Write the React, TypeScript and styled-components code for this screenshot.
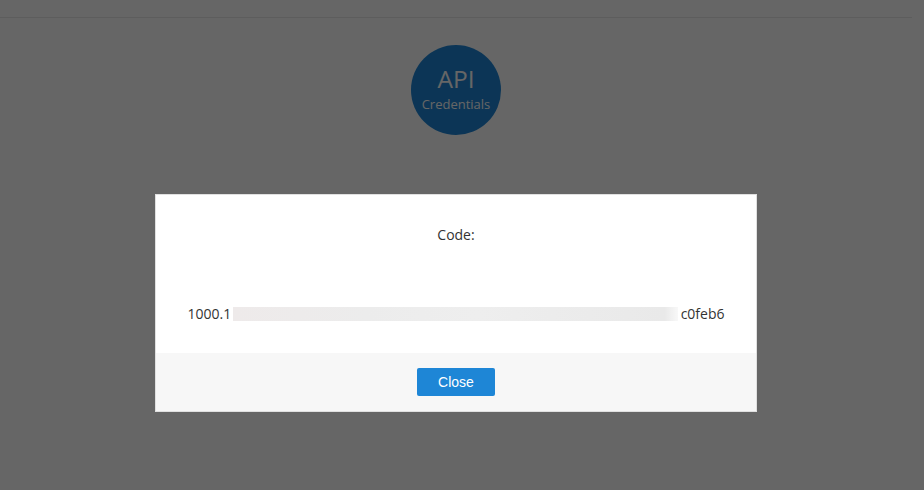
import styled, { createGlobalStyle } from 'styled-components';

const GlobalStyle = createGlobalStyle`
  html, body {
    margin: 0;
    padding: 0;
    height: 100%;
    background: #fff;
    font-family: 'Open Sans', sans-serif;
  }
`;

function App() {
  return (
    <>
      <GlobalStyle />
      <Page>
        <TopBar />
        <Badge>
          <BadgeTitle>API</BadgeTitle>
          <BadgeSub>Credentials</BadgeSub>
        </Badge>
      </Page>
      <Overlay>
        <Modal>
          <ModalBody>
            <CodeLabel>Code:</CodeLabel>
            <CodeRow>
              <span>1000.1</span>
              <Redacted />
              <span>c0feb6</span>
            </CodeRow>
          </ModalBody>
          <ModalFooter>
            <CloseBtn>Close</CloseBtn>
          </ModalFooter>
        </Modal>
      </Overlay>
    </>
  );
}

export default App;

const Page = styled.div`
  width: 912px;
  height: 490px;
  display: flex;
  flex-direction: column;
  align-items: center;
  overflow: hidden;
`;

const TopBar = styled.div`
  width: 924px;
  height: 17px;
  border-bottom: 1px solid #e8e8e8;
  flex-shrink: 0;
`;

const Badge = styled.div`
  width: 90px;
  height: 90px;
  margin-top: 27px;
  border-radius: 50%;
  background: #1e86d6;
  color: #fff;
  display: flex;
  flex-direction: column;
  align-items: center;
  justify-content: center;
`;

const BadgeTitle = styled.div`
  font-size: 24.5px;
  line-height: 28px;
  margin-top: -2px;
`;

const BadgeSub = styled.div`
  font-size: 13px;
  line-height: 18px;
  margin-top: 2px;
`;

const Overlay = styled.div`
  position: fixed;
  top: 0;
  left: 0;
  bottom: 0;
  right: 0;
  background: rgba(0, 0, 0, 0.6);
  display: flex;
  justify-content: center;
  padding: 194px 12px 0 0;
  box-sizing: border-box;
`;

const Modal = styled.div`
  width: 602px;
  height: 218px;
  box-sizing: border-box;
  background: #fff;
  border: 1px solid #e0e0e0;
  display: flex;
  flex-direction: column;
  align-self: flex-start;
`;

const ModalBody = styled.div`
  height: 158px;
  display: flex;
  flex-direction: column;
  align-items: center;
  color: #333;
  font-size: 14px;
`;

const CodeLabel = styled.div`
  margin-top: 30px;
  line-height: 20px;
`;

const CodeRow = styled.div`
  width: 537px;
  margin-top: 59px;
  display: flex;
  align-items: center;
  line-height: 20px;
`;

const Redacted = styled.div`
  flex: 1;
  height: 14px;
  margin: 0 3px 0 2px;
  background: linear-gradient(
    90deg,
    #eeeaea 0,
    #ececec 30%,
    #eeeeee 55%,
    #e9e9e9 97%,
    #f8f8f8 100%
  );
`;

const ModalFooter = styled.div`
  flex: 1;
  background: #f7f7f7;
  display: flex;
  justify-content: center;
  align-items: flex-start;
  padding-top: 15px;
`;

const CloseBtn = styled.button`
  width: 78px;
  height: 28px;
  border: none;
  border-radius: 2px;
  background: #1e86d6;
  color: #fff;
  font-family: 'Liberation Sans', Arial, sans-serif;
  font-size: 14px;
  cursor: pointer;
  padding: 0;
`;
